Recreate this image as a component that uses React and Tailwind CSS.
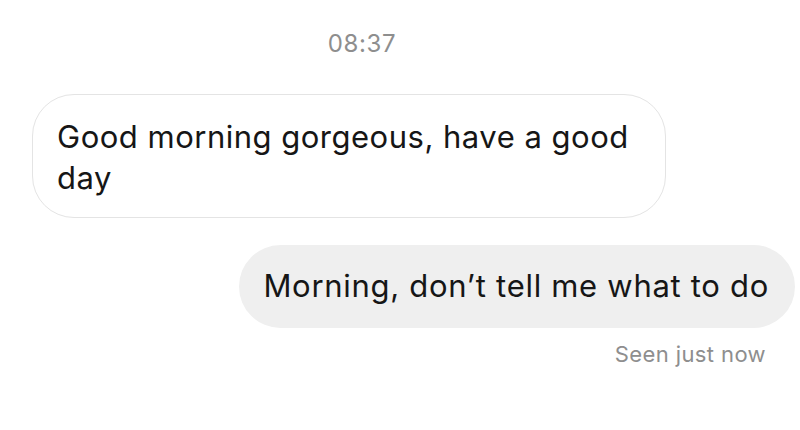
import React from 'react';

export default function App() {
  return (
    <div className="w-[800px] h-[430px] bg-white flex flex-col font-['Inter',sans-serif] antialiased">
      <div className="flex justify-center pr-[76px] pt-[30px]">
        <span className="text-[24px] leading-[28px] tracking-[0.6px] text-[#8e8e8e]">08:37</span>
      </div>

      <div className="mt-[36px] ml-[32px] w-[634px] h-[124px] rounded-[42px] border border-[#e4e4e4] bg-white pl-[24px] pr-[18px] pt-[21px]">
        <p className="text-[31px] leading-[41px] tracking-[0.5px] text-[#161616]">
          Good morning gorgeous, have a good day
        </p>
      </div>

      <div className="mt-[27px] self-end mr-[5px] h-[83px] rounded-full bg-[#efefef] flex items-center pl-[24px] pr-[26px]">
        <span className="text-[31px] tracking-[0.7px] text-[#161616]">Morning, don’t tell me what to do</span>
      </div>

      <div className="self-end mr-[34px] mt-[13px]">
        <span className="text-[22px] leading-[26px] tracking-[0.4px] text-[#8e8e8e]">Seen just now</span>
      </div>
    </div>
  );
}
